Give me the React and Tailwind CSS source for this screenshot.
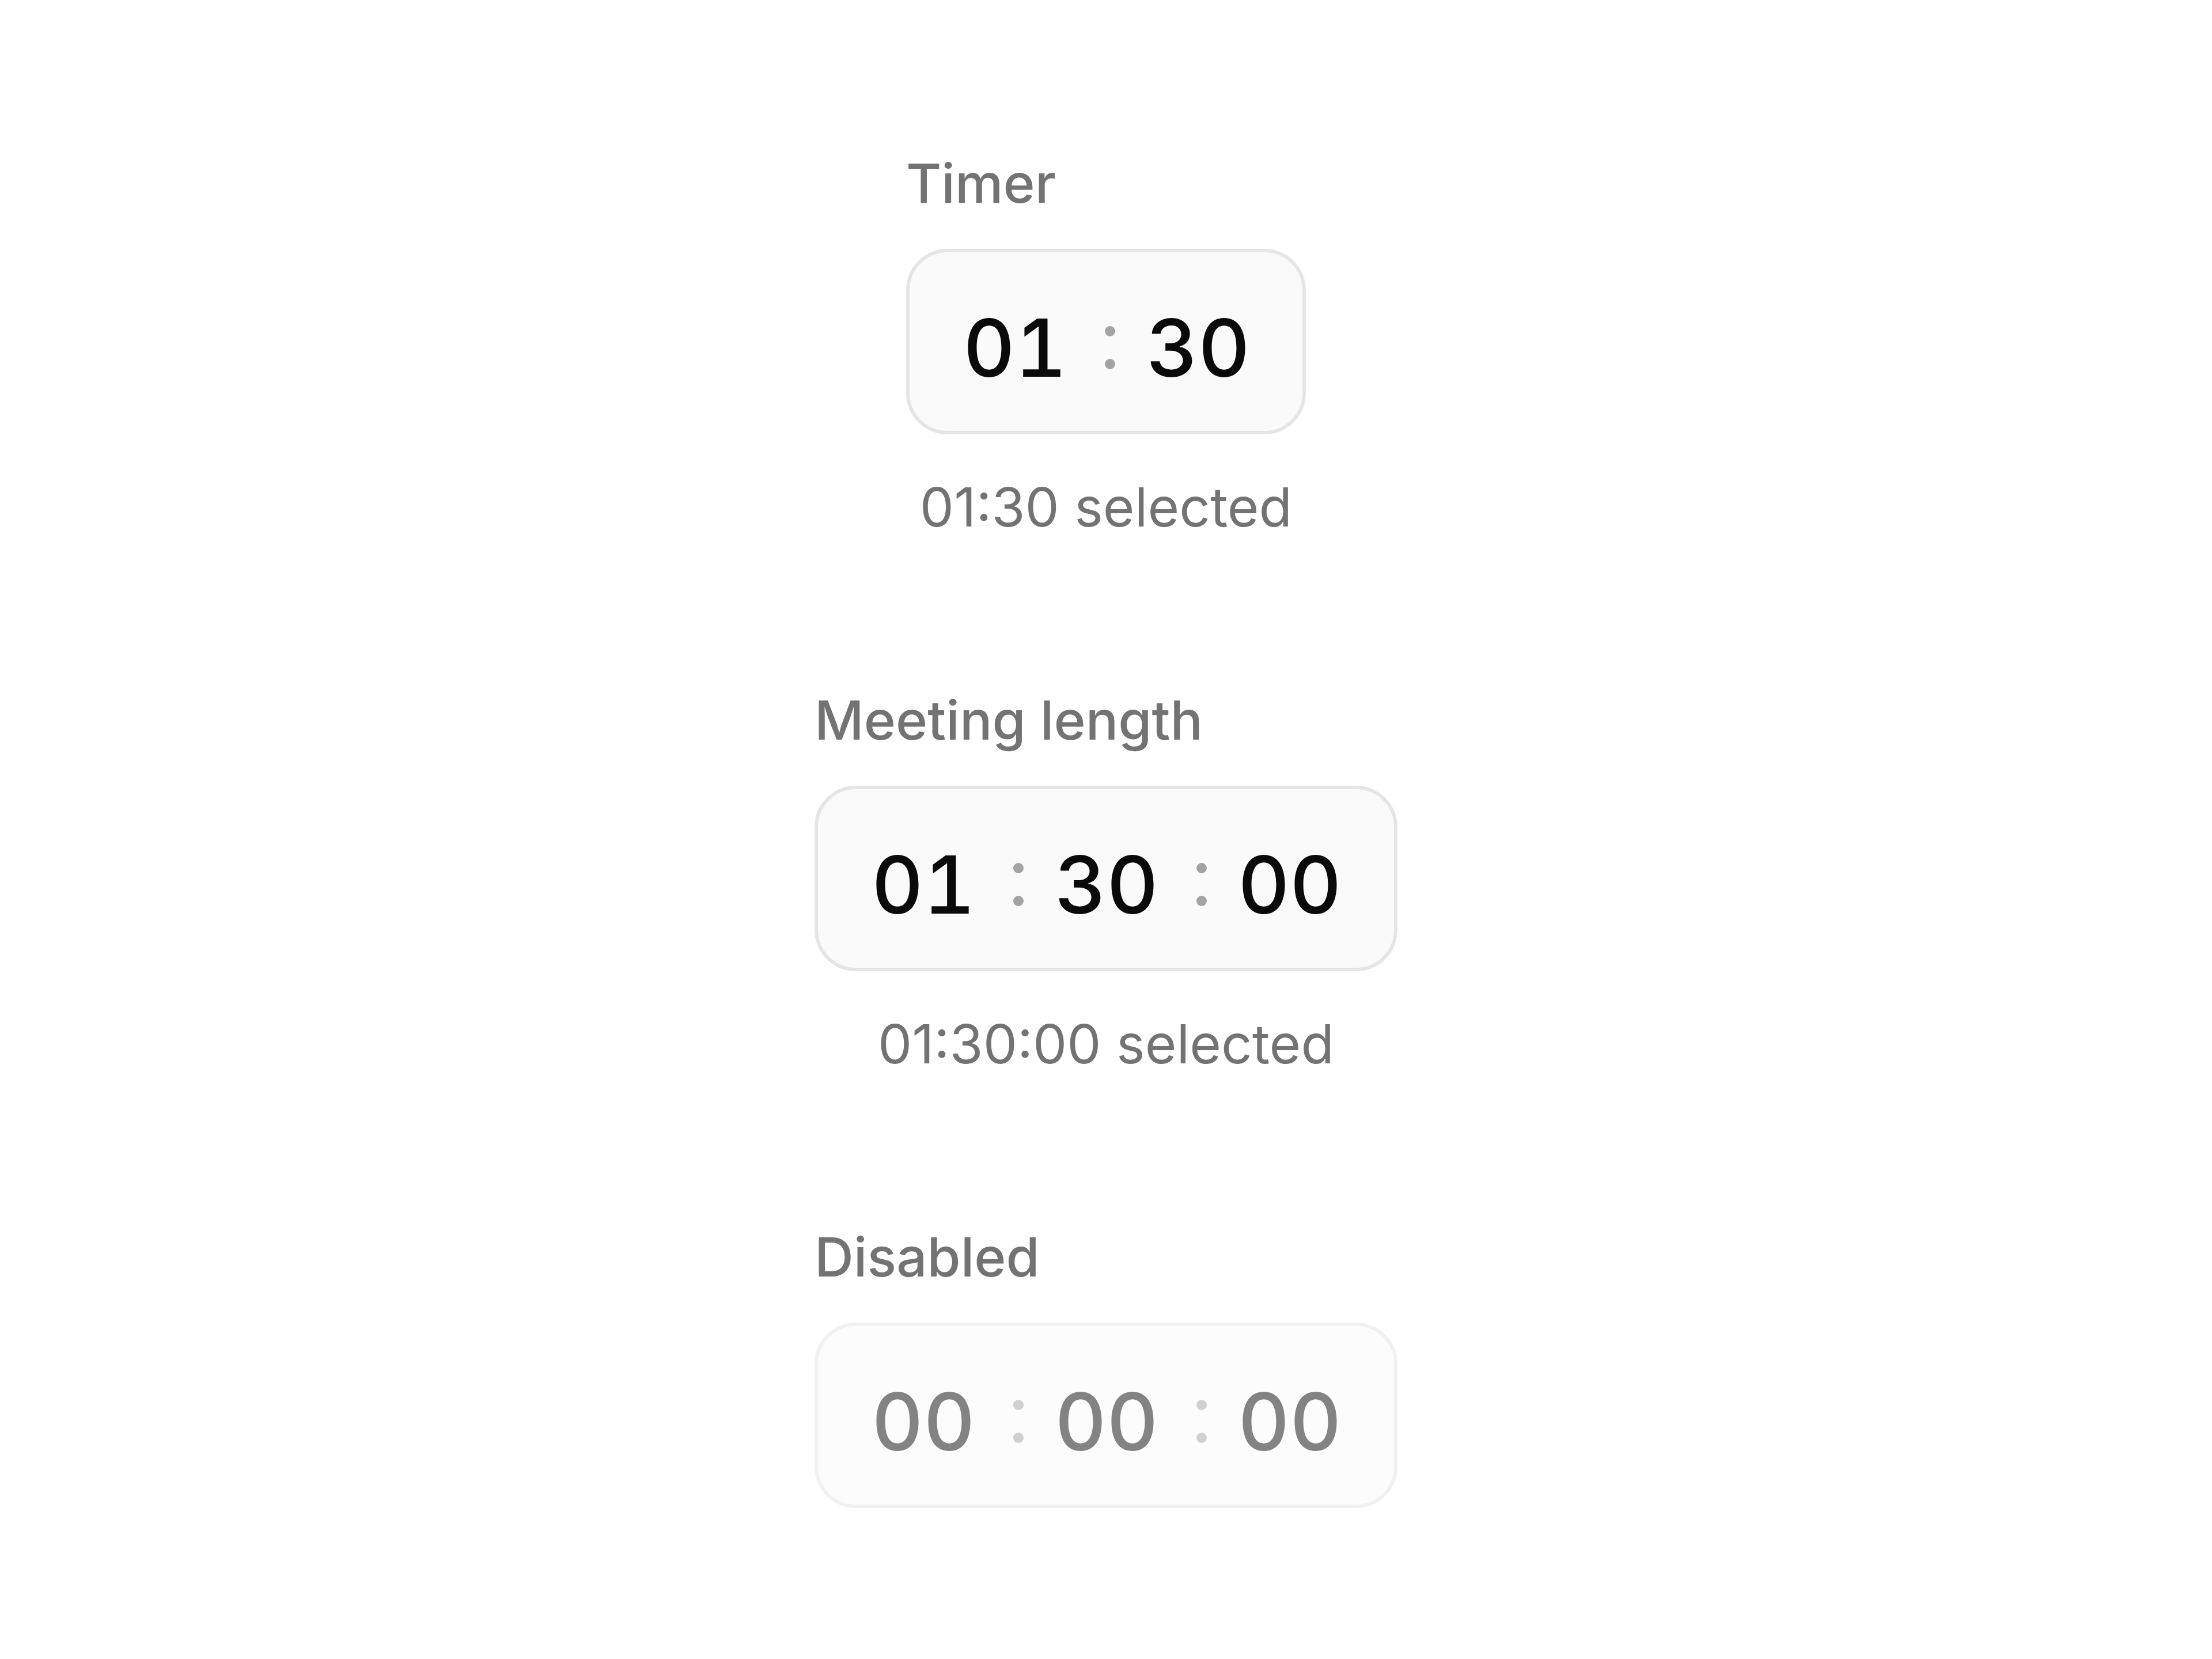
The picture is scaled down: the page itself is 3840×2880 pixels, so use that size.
import React from 'react';

const Colon = () => (
  <span className="flex w-[140px] flex-col items-center gap-[39px] pl-[14px]">
    <span className="size-[18px] rounded-full bg-[#a3a3a3]"></span>
    <span className="size-[18px] rounded-full bg-[#a3a3a3]"></span>
  </span>
);

const TimeField = ({ label, parts, caption, disabled }) => (
  <div className="flex flex-col items-start">
    <span className="text-[94px] leading-[120px] font-medium text-[#737373]">{label}</span>
    <div
      className={`mt-[54px] flex h-[322px] items-center rounded-[72px] border-[6px] border-[#e5e5e5] bg-[#fafafa] px-[93px] pt-[20px] ${
        disabled ? 'opacity-50' : ''
      }`}
    >
      {parts.map((part, i) => (
        <React.Fragment key={i}>
          {i > 0 && <Colon />}
          <span className="w-[178px] text-center text-[139px] leading-none font-medium tabular-nums text-[#0a0a0a]">
            {part}
          </span>
        </React.Fragment>
      ))}
    </div>
    {caption && (
      <span className="mt-[66px] self-center text-[94px] leading-[120px] text-[#737373]">{caption}</span>
    )}
  </div>
);

export default function App() {
  return (
    <div className="flex h-[2880px] w-full flex-col items-center gap-[250px] bg-white pt-[258px] font-['Inter','Noto_Sans',sans-serif]">
      <TimeField label="Timer" parts={['01', '30']} caption="01:30 selected" />
      <TimeField label="Meeting length" parts={['01', '30', '00']} caption="01:30:00 selected" />
      <TimeField label="Disabled" parts={['00', '00', '00']} disabled />
    </div>
  );
}
